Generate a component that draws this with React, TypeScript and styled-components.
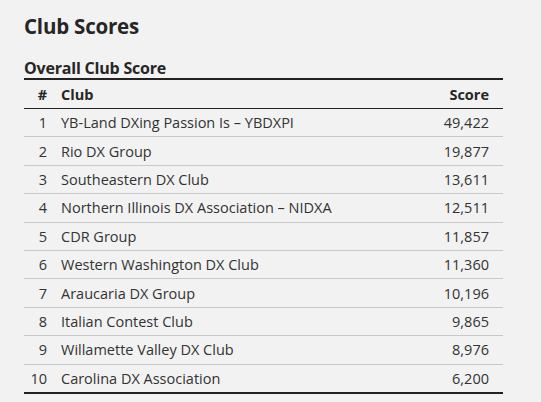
import React from "react";
import styled, { createGlobalStyle } from "styled-components";

const GlobalStyle = createGlobalStyle`
  html, body {
    margin: 0;
    background: #f2f2f2;
  }
  body {
    font-family: "Open Sans", "Noto Sans", sans-serif;
    color: #333;
  }
`;

const Page = styled.div`
  width: 541px;
  height: 402px;
  padding: 0 38px 0 24px;
  box-sizing: border-box;
  overflow: hidden;
`;

const Title = styled.h1`
  font-size: 20.5px;
  font-weight: 700;
  color: #262626;
  margin: 0;
  padding-top: 12px;
  line-height: 28px;
  letter-spacing: -0.2px;
`;

const Subtitle = styled.h2`
  font-size: 16px;
  font-weight: 700;
  color: #262626;
  margin: 18px 0 0;
  line-height: 20px;
  letter-spacing: -0.2px;
  border-bottom: 2px solid #222;
`;

const Table = styled.table`
  width: 100%;
  border-collapse: collapse;
  font-size: 14.5px;
  border-bottom: 2px solid #222;
`;

const Head = styled.th<{ $align?: "left" | "right"; $num?: boolean }>`
  font-weight: 700;
  color: #262626;
  text-align: ${(p) => p.$align || "left"};
  height: 28px;
  padding: ${(p) => (p.$num ? "0 7px 0 0" : p.$align === "right" ? "0 14px 0 7px" : "0 7px")};
  border-bottom: 1px solid #222;
  ${(p) => (p.$num ? "width: 23px;" : "")}
`;

const Row = styled.tr`
  & + & td {
    border-top: 1px solid #c8c8c8;
  }
`;

const Cell = styled.td<{ $align?: "left" | "right"; $num?: boolean }>`
  text-align: ${(p) => p.$align || "left"};
  height: 27.4px;
  padding: ${(p) => (p.$num ? "0 7px 0 0" : p.$align === "right" ? "0 14px 0 7px" : "0 7px")};
  white-space: nowrap;
`;

const clubs: [string, string][] = [
  ["YB-Land DXing Passion Is \u2013 YBDXPI", "49,422"],
  ["Rio DX Group", "19,877"],
  ["Southeastern DX Club", "13,611"],
  ["Northern Illinois DX Association \u2013 NIDXA", "12,511"],
  ["CDR Group", "11,857"],
  ["Western Washington DX Club", "11,360"],
  ["Araucaria DX Group", "10,196"],
  ["Italian Contest Club", "9,865"],
  ["Willamette Valley DX Club", "8,976"],
  ["Carolina DX Association", "6,200"],
];

const App = () => {
  return (
    <Page>
      <GlobalStyle />
      <Title>Club Scores</Title>
      <Subtitle>Overall Club Score</Subtitle>
      <Table>
        <thead>
          <tr>
            <Head $align="right" $num>
              #
            </Head>
            <Head>Club</Head>
            <Head $align="right">Score</Head>
          </tr>
        </thead>
        <tbody>
          {clubs.map(([name, score], i) => (
            <Row key={name}>
              <Cell $align="right" $num>
                {i + 1}
              </Cell>
              <Cell>{name}</Cell>
              <Cell $align="right">{score}</Cell>
            </Row>
          ))}
        </tbody>
      </Table>
    </Page>
  );
};

export default App;
